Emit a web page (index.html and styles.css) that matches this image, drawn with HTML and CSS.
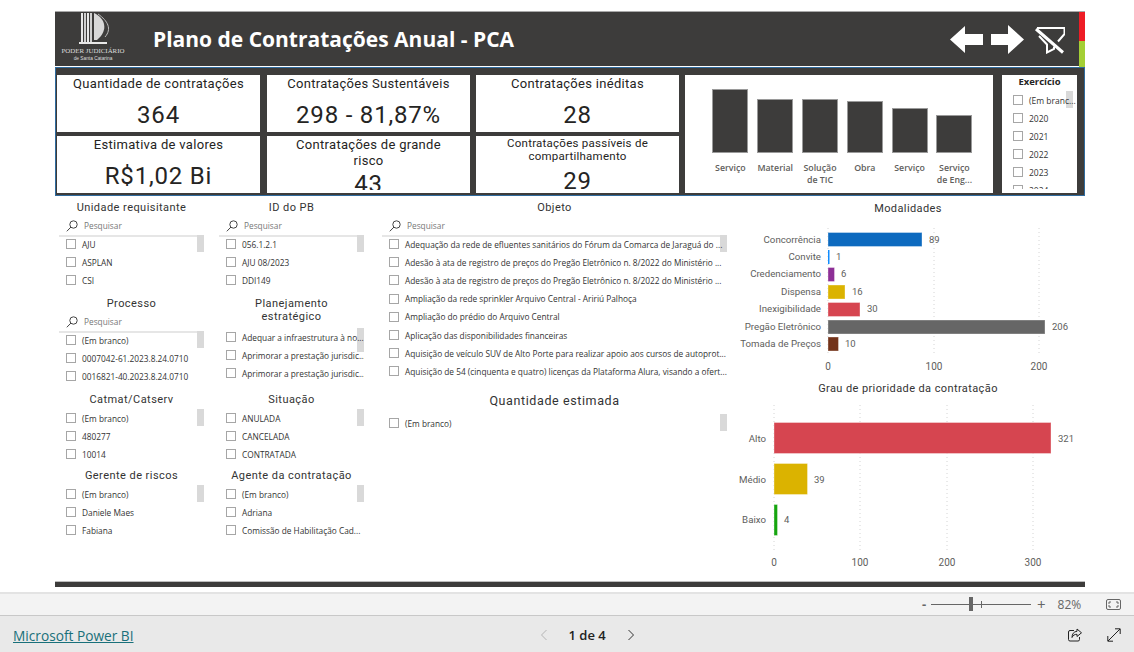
FILE: index.html
```html
<!DOCTYPE html>
<html lang="pt-BR">
<head>
<meta charset="UTF-8" />
<title>Plano de Contratações Anual - PCA</title>
<link rel="stylesheet" href="styles.css">
</head>
<body>

<div class="report">
  <header class="top">
    <div class="logo">
      <svg width="46" height="32" viewBox="0 0 46 32">
        <rect x="11" y="0" width="2" height="29" fill="#e8e8e8"/>
        <rect x="14" y="0" width="2" height="29" fill="#cfcfcf"/>
        <rect x="17" y="0" width="2" height="29" fill="#e8e8e8"/>
        <rect x="20" y="0" width="2" height="29" fill="#cfcfcf"/>
        <path d="M24 0C35 5 39 17 27 27H24Z" fill="#d8d8d8"/>
        <path d="M28 1C38 8 42 16 35 24" fill="none" stroke="#bdbdbd"/>
        <rect x="9" y="29" width="28" height="2" fill="#e8e8e8"/>
      </svg>
      <span class="logo-name">PODER JUDICIÁRIO</span>
      <span class="logo-sub">de Santa Catarina</span>
    </div>
    <h1>Plano de Contratações Anual - PCA</h1>
    <div class="top-icons">
      <svg width="33" height="29" viewBox="0 0 33 29"><path d="M0 14.5 15 1V9H33V20H15V28Z" fill="#fff"/></svg>
      <svg width="33" height="29" viewBox="0 0 33 29"><path d="M33 14.5 17 0V9H0V20H17V29Z" fill="#fff"/></svg>
      <svg width="31" height="29" viewBox="0 0 31 29" fill="none" stroke="#fff">
        <path d="M3 3H30.500V9L24 16.500" stroke-width="2"/>
        <path d="M5 11 13 19.500V27.500L20 24V21.500" stroke-width="2"/>
        <path d="M2 4 29 27.500" stroke-width="3"/>
      </svg>
    </div>
    <div class="strip"><span class="strip-red"></span><span class="strip-green"></span></div>
  </header>

  <section class="band">
    <div class="kpi-grid">
      <div class="kpi first">
        <div class="kpi-title">Quantidade de contratações</div>
        <div class="kpi-value">364</div>
      </div>
      <div class="kpi">
        <div class="kpi-title">Contratações Sustentáveis</div>
        <div class="kpi-value">298 - 81,87%</div>
      </div>
      <div class="kpi">
        <div class="kpi-title">Contratações inéditas</div>
        <div class="kpi-value">28</div>
      </div>
      <div class="type-chart">
        <div class="type-col"><div class="type-plot"><div class="type-bar" style="height:64px"></div></div><div class="type-label">Serviço</div></div>
        <div class="type-col"><div class="type-plot"><div class="type-bar" style="height:54px"></div></div><div class="type-label">Material</div></div>
        <div class="type-col"><div class="type-plot"><div class="type-bar" style="height:54px"></div></div><div class="type-label">Solução<br>de TIC</div></div>
        <div class="type-col"><div class="type-plot"><div class="type-bar" style="height:52px"></div></div><div class="type-label">Obra</div></div>
        <div class="type-col"><div class="type-plot"><div class="type-bar" style="height:45px"></div></div><div class="type-label">Serviço</div></div>
        <div class="type-col"><div class="type-plot"><div class="type-bar" style="height:38px"></div></div><div class="type-label">Serviço<br>de Eng...</div></div>
      </div>
      <div class="year-card">
        <div class="year-title">Exercício</div>
        <div class="scroll-thumb year-thumb"></div>
        <div class="year-item"><span class="check"></span>(Em branc...</div>
        <div class="year-item"><span class="check"></span>2020</div>
        <div class="year-item"><span class="check"></span>2021</div>
        <div class="year-item"><span class="check"></span>2022</div>
        <div class="year-item"><span class="check"></span>2023</div>
        <div class="year-item"><span class="check"></span>2024</div>
      </div>
      <div class="kpi first">
        <div class="kpi-title">Estimativa de valores</div>
        <div class="kpi-value">R$1,02 Bi</div>
      </div>
      <div class="kpi">
        <div class="kpi-title two">Contratações de grande<br>risco</div>
        <div class="kpi-value tight">43</div>
      </div>
      <div class="kpi">
        <div class="kpi-title small">Contratações passíveis de compartilhamento</div>
        <div class="kpi-value tight">29</div>
      </div>
    </div>
  </section>

  <main class="filters">
    <div class="col col-narrow">
      <div class="slicer tall">
        <div class="slicer-title">Unidade requisitante</div>
        <div class="search"><svg class="lens" width="12" height="12" viewBox="0 0 12 12"><circle cx="7.5" cy="4.5" r="3.7" fill="none" stroke="#444"/><path d="M5 7 .8 11.3" stroke="#444"/></svg>Pesquisar</div>
        <div class="list">
          <div class="scroll-thumb"></div>
          <div class="item"><span class="check"></span>AJU</div>
          <div class="item"><span class="check"></span>ASPLAN</div>
          <div class="item"><span class="check"></span>CSI</div>
        </div>
      </div>
      <div class="slicer tall">
        <div class="slicer-title">Processo</div>
        <div class="search"><svg class="lens" width="12" height="12" viewBox="0 0 12 12"><circle cx="7.5" cy="4.5" r="3.7" fill="none" stroke="#444"/><path d="M5 7 .8 11.3" stroke="#444"/></svg>Pesquisar</div>
        <div class="list">
          <div class="scroll-thumb"></div>
          <div class="item"><span class="check"></span>(Em branco)</div>
          <div class="item"><span class="check"></span>0007042-61.2023.8.24.0710</div>
          <div class="item"><span class="check"></span>0016821-40.2023.8.24.0710</div>
        </div>
      </div>
      <div class="slicer short">
        <div class="slicer-title">Catmat/Catserv</div>
        <div class="list plain">
          <div class="scroll-thumb"></div>
          <div class="item"><span class="check"></span>(Em branco)</div>
          <div class="item"><span class="check"></span>480277</div>
          <div class="item"><span class="check"></span>10014</div>
        </div>
      </div>
      <div class="slicer short">
        <div class="slicer-title">Gerente de riscos</div>
        <div class="list plain">
          <div class="scroll-thumb"></div>
          <div class="item"><span class="check"></span>(Em branco)</div>
          <div class="item"><span class="check"></span>Daniele Maes</div>
          <div class="item"><span class="check"></span>Fabiana</div>
        </div>
      </div>
    </div>

    <div class="col col-narrow">
      <div class="slicer tall">
        <div class="slicer-title">ID do PB</div>
        <div class="search"><svg class="lens" width="12" height="12" viewBox="0 0 12 12"><circle cx="7.5" cy="4.5" r="3.7" fill="none" stroke="#444"/><path d="M5 7 .8 11.3" stroke="#444"/></svg>Pesquisar</div>
        <div class="list">
          <div class="scroll-thumb"></div>
          <div class="item"><span class="check"></span>056.1.2.1</div>
          <div class="item"><span class="check"></span>AJU 08/2023</div>
          <div class="item"><span class="check"></span>DDI149</div>
        </div>
      </div>
      <div class="slicer tall">
        <div class="slicer-title two">Planejamento estratégico</div>
        <div class="list clipped">
          <div class="scroll-thumb"></div>
          <div class="item"><span class="check"></span>Adequar a infraestrutura à no...</div>
          <div class="item"><span class="check"></span>Aprimorar a prestação jurisdic...</div>
          <div class="item"><span class="check"></span>Aprimorar a prestação jurisdic...</div>
          <div class="item"><span class="check"></span>Aprimorar a prestação jurisdic...</div>
        </div>
      </div>
      <div class="slicer short">
        <div class="slicer-title">Situação</div>
        <div class="list plain">
          <div class="scroll-thumb"></div>
          <div class="item"><span class="check"></span>ANULADA</div>
          <div class="item"><span class="check"></span>CANCELADA</div>
          <div class="item"><span class="check"></span>CONTRATADA</div>
        </div>
      </div>
      <div class="slicer short">
        <div class="slicer-title">Agente da contratação</div>
        <div class="list plain">
          <div class="scroll-thumb"></div>
          <div class="item"><span class="check"></span>(Em branco)</div>
          <div class="item"><span class="check"></span>Adriana</div>
          <div class="item"><span class="check"></span>Comissão de Habilitação Cad...</div>
        </div>
      </div>
    </div>

    <div class="col col-wide">
      <div class="slicer object">
        <div class="slicer-title">Objeto</div>
        <div class="search"><svg class="lens" width="12" height="12" viewBox="0 0 12 12"><circle cx="7.5" cy="4.5" r="3.7" fill="none" stroke="#444"/><path d="M5 7 .8 11.3" stroke="#444"/></svg>Pesquisar</div>
        <div class="list">
          <div class="scroll-thumb"></div>
          <div class="item"><span class="check"></span>Adequação da rede de efluentes sanitários do Fórum da Comarca de Jaraguá do ...</div>
          <div class="item"><span class="check"></span>Adesão à ata de registro de preços do Pregão Eletrônico n. 8/2022 do Ministério ...</div>
          <div class="item"><span class="check"></span>Adesão à ata de registro de preços do Pregão Eletrônico n. 8/2022 do Ministério ...</div>
          <div class="item"><span class="check"></span>Ampliação da rede sprinkler Arquivo Central - Aririú Palhoça</div>
          <div class="item"><span class="check"></span>Ampliação do prédio do Arquivo Central</div>
          <div class="item"><span class="check"></span>Aplicação das disponibilidades financeiras</div>
          <div class="item"><span class="check"></span>Aquisição de veículo SUV de Alto Porte para realizar apoio aos cursos de autoprot...</div>
          <div class="item"><span class="check"></span>Aquisição de 54 (cinquenta e quatro) licenças da Plataforma Alura, visando a ofert...</div>
        </div>
      </div>
      <div class="slicer">
        <div class="slicer-title big">Quantidade estimada</div>
        <div class="list plain">
          <div class="scroll-thumb"></div>
          <div class="item"><span class="check"></span>(Em branco)</div>
        </div>
      </div>
    </div>

    <div class="col col-charts">
      <div class="chart-title">Modalidades</div>
      <svg class="chart chart-mod" width="346" height="162" viewBox="0 0 346 162">
        <g class="grid">
          <line x1="93" y1="11" x2="93" y2="139"/>
          <line x1="199" y1="11" x2="199" y2="139"/>
          <line x1="304" y1="11" x2="304" y2="139"/>
        </g>
        <g class="cats">
          <text x="86" y="26">Concorrência</text>
          <text x="86" y="43">Convite</text>
          <text x="86" y="60">Credenciamento</text>
          <text x="86" y="78">Dispensa</text>
          <text x="86" y="95">Inexigibilidade</text>
          <text x="86" y="113">Pregão Eletrônico</text>
          <text x="86" y="130">Tomada de Preços</text>
        </g>
        <rect x="93" y="15.5" width="94" height="14" fill="#0d6abf" class="bar"/>
        <rect x="93" y="33" width="1.5" height="14" fill="#118dff"/>
        <rect x="93" y="50.5" width="6.5" height="14" fill="#8d2f96" class="bar"/>
        <rect x="93" y="68" width="17" height="14" fill="#dbb300" class="bar"/>
        <rect x="93" y="85.5" width="32" height="14" fill="#d64550" class="bar"/>
        <rect x="93" y="103" width="217" height="14" fill="#666666" class="bar"/>
        <rect x="93" y="120" width="10.5" height="14" fill="#73331a" class="bar"/>
        <g class="vals">
          <text x="194" y="25.5">89</text>
          <text x="101" y="43">1</text>
          <text x="106" y="60">6</text>
          <text x="117" y="78">16</text>
          <text x="132" y="95">30</text>
          <text x="317" y="113">206</text>
          <text x="110" y="130">10</text>
        </g>
        <g class="ticks">
          <text x="93" y="153">0</text>
          <text x="199" y="153">100</text>
          <text x="304" y="153">200</text>
        </g>
      </svg>
      <div class="chart-title">Grau de prioridade da contratação</div>
      <svg class="chart" width="346" height="184" viewBox="0 0 346 184">
        <g class="grid">
          <line x1="39" y1="8" x2="39" y2="156"/>
          <line x1="125" y1="8" x2="125" y2="156"/>
          <line x1="212" y1="8" x2="212" y2="156"/>
          <line x1="298" y1="8" x2="298" y2="156"/>
        </g>
        <g class="cats">
          <text x="31" y="45">Alto</text>
          <text x="31" y="86">Médio</text>
          <text x="31" y="126">Baixo</text>
        </g>
        <rect x="39" y="25.5" width="277" height="31" fill="#d64550" class="bar"/>
        <rect x="39" y="66.5" width="33.5" height="31" fill="#dbb300" class="bar"/>
        <rect x="39" y="107.5" width="3.5" height="31" fill="#16a50f" class="bar"/>
        <g class="vals">
          <text x="323" y="45">321</text>
          <text x="79" y="86">39</text>
          <text x="49" y="126">4</text>
        </g>
        <g class="ticks">
          <text x="39" y="169">0</text>
          <text x="125" y="169">100</text>
          <text x="212" y="169">200</text>
          <text x="298" y="169">300</text>
        </g>
      </svg>
    </div>
  </main>

  <div class="bottom-rule"></div>
</div>

<div class="zoombar">
  <span class="zoom-sign">-</span>
  <div class="slider"><span class="slider-tick"></span><span class="slider-thumb"></span></div>
  <span class="zoom-sign plus">+</span>
  <span class="zoom-pct">82%</span>
  <svg class="fit" width="15" height="11" viewBox="0 0 15 11" fill="none" stroke="#666">
    <rect x=".5" y=".5" width="14" height="10" rx="1.5"/>
    <path d="M5 3H3V5M10 3H12V5M5 8H3V6M10 8H12V6"/>
  </svg>
</div>

<footer class="pbi-footer">
  <a class="pbi-link" href="#">Microsoft Power BI</a>
  <nav class="pager">
    <svg width="8" height="12" viewBox="0 0 8 12" fill="none" stroke="#b5b5b5"><path d="M6.5 1 1.5 6 6.5 11"/></svg>
    <span class="page-num">1 de 4</span>
    <svg width="8" height="12" viewBox="0 0 8 12" fill="none" stroke="#333"><path d="M1.5 1 6.5 6 1.5 11"/></svg>
  </nav>
  <div class="foot-icons">
    <svg width="14" height="14" viewBox="0 0 14 14" fill="none" stroke="#222">
      <path d="M6 2.5H2A1.5 1.5 0 0 0 .5 4V11.5A1.5 1.5 0 0 0 2 13H10A1.5 1.5 0 0 0 11.5 11.5V9"/>
      <path d="M9 1 13.5 4.8 9 8.5V6.3C6.5 6.3 5 7.3 4 9.5 4 6 5.800 3.500 9 3.300Z"/>
    </svg>
    <svg width="14" height="14" viewBox="0 0 14 14" fill="none" stroke="#222">
      <path d="M1 13 13 1M8 .8H13.200V6M.8 8V13.200H6"/>
    </svg>
  </div>
</footer>

</body>
</html>
```
FILE: styles.css
```css
*{box-sizing:border-box;}
html,body{margin:0; height:652px; overflow:hidden;}
body{background:#fff; font-family:"Open Sans",sans-serif; color:#333;}

.report{width:1030px; height:592px; margin-left:55px; padding-top:11px;}

/* header */
.top{display:flex; align-items:center; height:56px; background:#3d3c3b; border-top:1px solid #a9a9a9;}
.logo{display:flex; flex-direction:column; align-items:center; align-self:flex-start; width:66px; margin-left:5px; padding-top:1px; color:#ddd; font-family:"Liberation Serif",serif; line-height:1;}
.logo svg{display:block;}
.logo-name{font-size:6.900px; white-space:nowrap; margin-top:3px;}
.logo-sub{font-size:4.800px; white-space:nowrap; margin-top:2px; font-family:"Liberation Sans",sans-serif;}
h1{margin:0 0 2px 27px; font-size:21px; font-weight:700; color:#fff; white-space:nowrap;}
.top-icons{display:flex; align-items:center; gap:8px; margin-left:auto; margin-right:14px;}
.top-icons svg:last-child{margin-left:2px;}
.strip{display:flex; flex-direction:column; width:6px; height:100%;}
.strip-red{height:29px; background:#ee1c25;}
.strip-green{flex:1; background:#a4cf35;}

/* kpi band */
.band{height:129px; background:#3d3c3b; border:1px solid #2f6b9e; padding:7px 0 0 1px; box-shadow:0 -1px 0 #fff;}
.kpi-grid{display:grid; grid-template-columns:204px 203px 203px 311px 75px; grid-template-rows:57px 57px; column-gap:6px; row-gap:4px;}
.kpi{background:#fff; text-align:center; overflow:hidden; border-bottom:3px solid #fff; font-family:Roboto,sans-serif; color:#252423;}
.kpi.first{margin-right:1px;}
.kpi-title{font-size:13px; line-height:18px; letter-spacing:.3px; padding:0 8px;}
.kpi-title.two{line-height:16px; padding-top:1px;}
.kpi-title.small{font-size:11.500px; line-height:13px; padding-top:1px; letter-spacing:.25px;}
.kpi-value{font-size:24px; line-height:28px; margin-top:8px; letter-spacing:.8px;}
.kpi-value.tight{margin-top:1px;}
.kpi-title.small + .kpi-value.tight{margin-top:4px;}

.type-chart{grid-row:1 / span 2; grid-column:4; display:flex; align-items:flex-start; margin-right:3px; padding-left:23px; background:#fff;}
.type-col{width:44.800px; flex:none; text-align:center;}
.type-plot{display:flex; align-items:flex-end; justify-content:center; height:78px;}
.type-bar{width:36px; background:#3d3c3b; border:1px solid #9a9a9a;}
.type-label{margin-top:9px; font-size:8.800px; font-weight:600; line-height:12px; color:#605e5c;}

.year-card{grid-row:1 / span 2; grid-column:5; position:relative; background:#fff; overflow:hidden; border-bottom:4px solid #fff; padding-left:11px;}
.year-title{margin-left:-11px; text-align:center; font-size:9.500px; font-weight:700; line-height:13px; margin-bottom:3px; color:#252423;}
.year-item{position:relative; display:flex; align-items:center; height:18px; font-size:8.500px; white-space:nowrap;}
.year-item .check{margin-right:6px;}

/* slicers */
.filters{display:flex; height:385px; padding:2px 0 0 4px;}
.col{flex:none;}
.col-narrow{width:145px; margin-right:15px;}
.col-narrow + .col-narrow{margin-right:18px;}
.col-wide{width:345px; margin-right:8px;}
.col-charts{width:346px; margin-top:1px;}
.slicer{position:relative; overflow:hidden;}
.slicer.tall{height:96px;}
.slicer.short{height:76px;}
.slicer.object{height:193px;}
.slicer-title{height:18px; font-family:Roboto,sans-serif; font-size:11px; line-height:20px; letter-spacing:.45px; text-align:center; color:#333;}
.slicer-title.two{height:auto; line-height:13px; padding:3px 20px 0; margin-bottom:5px;}
.slicer-title.big{font-size:12.500px; letter-spacing:.6px;}
.search{display:flex; align-items:center; height:21px; margin-bottom:-2px; padding:0 0 0 7px; border-bottom:2px solid #e6e6e6; font-size:8.300px; color:#777;}
.lens{margin-right:6px;}
.list{position:relative;}
.list.plain{margin-top:1px;}
.slicer-title.big + .list.plain{margin-top:5px;}
.list.clipped{height:58px; overflow:hidden;}
.item{position:relative; display:flex; align-items:center; height:18.200px; padding-left:7px; font-size:8.300px; color:#333; white-space:nowrap; overflow:hidden;}
.check{flex:none; width:10px; height:10px; margin-right:6px; border:1px solid #a6a6a6; background:#fff;}
.scroll-thumb{position:absolute; top:0; right:0; width:7px; height:17px; background:#d9d9d9;}
.list.clipped .scroll-thumb{height:24px;}
.year-card .year-thumb{top:16px; right:4px;}

/* charts */
.chart-title{height:18px; font-family:Roboto,sans-serif; font-size:11px; line-height:20px; letter-spacing:.4px; text-align:center; color:#333;}
.chart{display:block;}
.grid line{stroke:#d4d4d4; stroke-dasharray:1 3;}
.bar{stroke:#fff; stroke-opacity:.35;}
.chart text{font-family:Roboto,sans-serif; font-size:10px; fill:#605e5c;}
.cats text{font-size:9.700px; text-anchor:end;}
.ticks text{text-anchor:middle;}
.vals text{font-size:9.500px;}

.bottom-rule{height:6px; background:#3d3c3b; border-top:1px solid #bdbdbd;}

/* power bi chrome */
.zoombar{display:flex; align-items:center; height:23px; background:#f3f3f3; border-top:2px solid #e3e3e3; padding-left:922px;}
.zoom-sign{width:5px; font-size:13px; font-weight:700; line-height:1; color:#666;}
.zoom-sign.plus{width:auto; margin-left:6px; font-weight:400; font-size:15px;}
.slider{position:relative; width:100px; height:1px; margin-left:4px; background:#666;}
.slider-thumb{position:absolute; left:38px; top:-7px; width:4px; height:14px; background:#666;}
.slider-tick{position:absolute; left:50px; top:-3px; width:1px; height:7px; background:#666;}
.zoom-pct{margin-left:12px; font-size:12px; color:#666;}
.fit{margin-left:25px;}

.pbi-footer{display:flex; align-items:center; height:37px; background:#e9e9e9; border-top:1px solid #c8c8c8; padding:2px 0 0 13px;}
.pbi-link{font-family:"Open Sans",sans-serif; font-size:13.700px; color:#19707a;}
.pager{display:flex; align-items:center; gap:21px; margin-left:406px;}
.page-num{font-size:13px; font-weight:600; color:#222;}
.foot-icons{display:flex; align-items:center; gap:25px; margin-left:433px;}
```
